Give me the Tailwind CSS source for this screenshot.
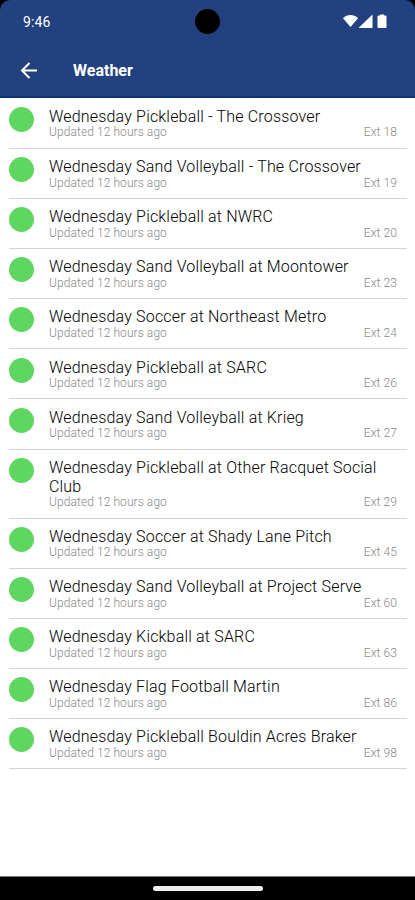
<!DOCTYPE html>
<html lang="en">
  <head>
    <meta charset="UTF-8" />
    <meta name="viewport" content="width=device-width, initial-scale=1.0" />
    <title>Weather</title>
    <script src="https://cdn.jsdelivr.net/npm/@tailwindcss/browser@4"></script>
  </head>
  <body class="bg-black font-['Roboto',sans-serif]">
    <div class="relative flex flex-col w-[415px] h-[900px] overflow-hidden">
      <header class="shrink-0 h-[98px] bg-[#22417e] rounded-t-[10px] border-b-2 border-[#0c3470]">
        <div class="flex items-center justify-between h-[43px] pl-[23px] pr-[26px]">
          <span class="pt-px text-[14px] text-white tracking-[0.1px]">9:46</span>
          <svg class="w-[46px] h-[15px]" viewBox="0 0 46 15" fill="#fff">
            <path d="M0 4.300C4 0 11 0 15 4.300L7.500 13Z" />
            <path d="M15.500 14L29.500 0.500V14Z" />
            <path d="M37 0.500h4v1h1.500a1 1 0 0 1 1 1V13a1 1 0 0 1-1 1h-7a1 1 0 0 1-1-1V2.500a1 1 0 0 1 1-1h1.500z" />
          </svg>
        </div>
        <div class="flex items-center h-[54px] pl-[20px] gap-[35px]">
          <svg class="w-[18px] h-[18px]" viewBox="0 0 18 18" fill="none" stroke="#fff" stroke-width="2">
            <path d="M17 9.500H2M9.500 2L2 9.500L9.500 17" />
          </svg>
          <h1 class="pt-[2px] text-[16px] font-bold text-white">Weather</h1>
        </div>
      </header>
      <!-- camera cutout -->
      <div class="absolute left-[195px] top-[9px] size-[25px] rounded-full bg-black"></div>
      <main id="fieldList" class="flex-1 bg-white px-[9px] pt-[0.7px]"></main>
      <footer class="shrink-0 h-[24px] bg-black border-t border-[#777] flex justify-center pt-[9px]">
        <div class="w-[110px] h-[5px] rounded-full bg-[#eee]"></div>
      </footer>
    </div>
  </body>
<script>
  const fields = [
    ["Wednesday Pickleball - The Crossover", 18],
    ["Wednesday Sand Volleyball - The Crossover", 19],
    ["Wednesday Pickleball at NWRC", 20],
    ["Wednesday Sand Volleyball at Moontower", 23],
    ["Wednesday Soccer at Northeast Metro", 24],
    ["Wednesday Pickleball at SARC", 26],
    ["Wednesday Sand Volleyball at Krieg", 27],
    ["Wednesday Pickleball at Other Racquet Social Club", 29],
    ["Wednesday Soccer at Shady Lane Pitch", 45],
    ["Wednesday Sand Volleyball at Project Serve", 60],
    ["Wednesday Kickball at SARC", 63],
    ["Wednesday Flag Football Martin", 86],
    ["Wednesday Pickleball Bouldin Acres Braker", 98],
  ];
  const fieldList = document.getElementById("fieldList");
  fields.forEach(([name, ext]) => {
    const row = document.createElement("div");
    row.className = "flex gap-[15px] w-[398px] pt-[8.2px] pb-[8.35px] border-b border-[#d3d3d3]";
    row.innerHTML = `
      <div class="shrink-0 size-[25px] rounded-full bg-[#5fd65f]"></div>
      <div class="flex-1 pr-[10px]">
        <h2 class="text-[16px] leading-[19px] font-light text-black tracking-[0.18px]">${name}</h2>
        <div class="flex justify-between mt-[0.6px] text-[12px] leading-[13px] font-light text-[#888] tracking-[0.08px]">
          <span>Updated 12 hours ago</span>
          <span>Ext ${ext}</span>
        </div>
      </div>
    `;
    fieldList.appendChild(row);
  });
</script>
</html>
